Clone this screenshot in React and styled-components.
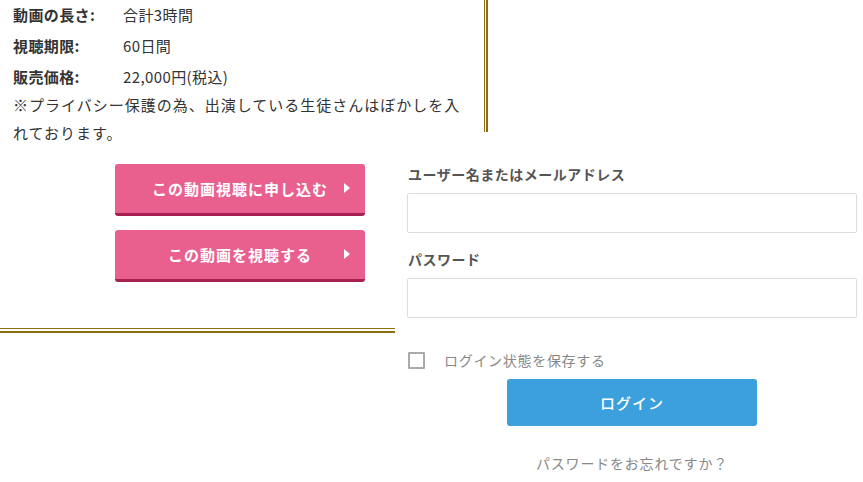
import React from 'react';
import styled, { createGlobalStyle } from 'styled-components';

const Global = createGlobalStyle`
  html, body { margin: 0; padding: 0; background: #fff; }
  body { font-family: "Noto Sans CJK JP", "Noto Sans", sans-serif; color: #333; }
`;

const GOLD = '#8d6c12';

const Page = styled.div`
  width: 863px;
  height: 482px;
  overflow: hidden;
`;

const InfoBlock = styled.div`
  display: flex;
  width: 488px;
`;

const InfoText = styled.div`
  flex: 1;
  padding: 3px 0 0 13px;
  font-size: 15px;
  letter-spacing: 1px;
`;

const SpecRow = styled.dl`
  display: grid;
  grid-template-columns: 110px 1fr;
  margin: 0;
  height: 31px;
  line-height: 24px;
  dt, dd { margin: 0; font-size: 15px; letter-spacing: 0.4px; }
  dt { font-weight: 700; }
`;

const Note = styled.p`
  margin: 0;
  line-height: 28px;
  margin-top: -5px;
  padding-right: 14px;
`;

const VRule = styled.div`
  align-self: flex-start;
  height: 132px;
  width: 4px;
  box-sizing: border-box;
  border-left: 1px solid ${GOLD};
  border-right: 2px solid ${GOLD};
`;

const Lower = styled.div`
  display: grid;
  grid-template-columns: 395px 450px;
  column-gap: 12px;
  margin-top: 17px;
`;

const LeftCol = styled.div`
  display: flex;
  flex-direction: column;
`;

const ButtonStack = styled.div`
  display: flex;
  flex-direction: column;
  gap: 14px;
  padding-left: 115px;
`;

const PinkButton = styled.button`
  position: relative;
  width: 250px;
  height: 52px;
  border: none;
  border-bottom: 3px solid #a81f52;
  border-radius: 3px;
  background: #e9608f;
  color: #fff;
  font-family: inherit;
  font-size: 15px;
  font-weight: 700;
  letter-spacing: 1px;
  padding: 0;
  display: flex;
  align-items: center;
  justify-content: center;
  cursor: pointer;
`;

const Arrow = styled.span`
  position: absolute;
  right: 15px;
  top: 50%;
  margin-top: -6px;
  width: 0;
  height: 0;
  border-top: 5px solid transparent;
  border-bottom: 5px solid transparent;
  border-left: 6px solid #fff;
`;

const HRule = styled.div`
  margin-top: 46px;
  height: 5px;
  box-sizing: border-box;
  border-top: 1px solid ${GOLD};
  border-bottom: 2px solid ${GOLD};
`;

const Form = styled.form`
  display: flex;
  flex-direction: column;
`;

const Label = styled.label`
  font-size: 14px;
  font-weight: 700;
  color: #555;
  letter-spacing: 0.5px;
  line-height: 20px;
  padding-left: 1px;
  margin-bottom: 9px;
`;

const Input = styled.input`
  box-sizing: border-box;
  width: 450px;
  height: 40px;
  border: 1px solid #ddd;
  border-radius: 2px;
  margin: 0 0 ${p => p.$mb}px;
`;

const RememberRow = styled.label`
  display: flex;
  align-items: center;
  gap: 19px;
  margin-top: 32px;
  padding-left: 1px;
  font-size: 14px;
  line-height: 20px;
  color: #888;
  letter-spacing: 0.7px;
`;

const Check = styled.span`
  width: 17px;
  height: 17px;
  box-sizing: border-box;
  border: 2px solid #aaa;
  border-radius: 1px;
  background: #fff;
`;

const LoginButton = styled.button`
  align-self: center;
  margin-top: 9px;
  width: 250px;
  height: 47px;
  border: none;
  border-radius: 3px;
  background: #3ba0db;
  color: #fff;
  font-family: inherit;
  font-size: 15px;
  font-weight: 500;
  letter-spacing: 1px;
  cursor: pointer;
`;

const Forgot = styled.a`
  align-self: center;
  margin-top: 27px;
  font-size: 14px;
  line-height: 20px;
  color: #888;
  letter-spacing: 0.8px;
  text-decoration: none;
`;

const specs = [
  ['動画の長さ:', '合計3時間'],
  ['視聴期限:', '60日間'],
  ['販売価格:', '22,000円(税込)'],
];

export default function App() {
  return (
    <Page>
      <Global />
      <InfoBlock>
        <InfoText>
          {specs.map(([k, v]) => (
            <SpecRow key={k}>
              <dt>{k}</dt>
              <dd>{v}</dd>
            </SpecRow>
          ))}
          <Note>※プライバシー保護の為、出演している生徒さんはぼかしを入れております。</Note>
        </InfoText>
        <VRule />
      </InfoBlock>

      <Lower>
        <LeftCol>
          <ButtonStack>
            <PinkButton>この動画視聴に申し込む<Arrow /></PinkButton>
            <PinkButton>この動画を視聴する<Arrow /></PinkButton>
          </ButtonStack>
          <HRule />
        </LeftCol>

        <Form onSubmit={e => e.preventDefault()}>
          <Label>ユーザー名またはメールアドレス</Label>
          <Input type="text" $mb={16} />
          <Label>パスワード</Label>
          <Input type="password" $mb={0} />
          <RememberRow>
            <Check />
            ログイン状態を保存する
          </RememberRow>
          <LoginButton type="submit">ログイン</LoginButton>
          <Forgot href="#">パスワードをお忘れですか？</Forgot>
        </Form>
      </Lower>
    </Page>
  );
}
